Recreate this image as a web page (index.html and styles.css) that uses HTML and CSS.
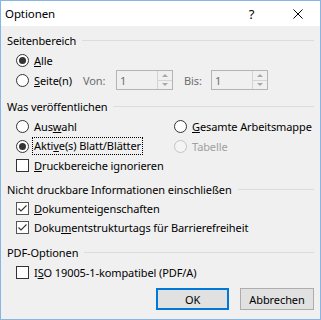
FILE: index.html
```html
<!DOCTYPE html>
<html lang="de">
<head>
  <meta charset="UTF-8"/>
  <title>Optionen</title>
  <link rel="stylesheet" href="styles.css">
</head>
<body>

  <div class="dialog">
    <!-- TITELLEISTE -->
    <div class="titlebar">
      <span class="title">Optionen</span>
      <span class="title-btn help">?</span>
      <span class="title-btn close">
        <svg width="10" height="10" viewBox="0 0 10 10"><path d="M0.5 0.5L9.5 9.5M9.5 0.5L0.5 9.5" stroke="#000" stroke-width="1" fill="none"/></svg>
      </span>
    </div>

    <div class="content">
      <!-- Seitenbereich -->
      <div class="group-head">Seitenbereich</div>
      <div class="row r20">
        <span class="radio checked"></span><span><u>A</u>lle</span>
      </div>
      <div class="row r20">
        <div class="opt opt-pages"><span class="radio"></span><span><u>S</u>eite(n)</span></div>
        <span class="spin-label von">Von:</span>
        <div class="spin">
          <span class="spin-val">1</span>
          <div class="spin-btns">
            <span class="arrow up"></span>
            <span class="arrow down"></span>
          </div>
        </div>
        <span class="spin-label bis">Bis:</span>
        <div class="spin">
          <span class="spin-val">1</span>
          <div class="spin-btns">
            <span class="arrow up"></span>
            <span class="arrow down"></span>
          </div>
        </div>
      </div>

      <!-- Was veröffentlichen -->
      <div class="group-head g2">Was veröffentlichen</div>
      <div class="grid">
        <div class="opt"><span class="radio"></span><span>Aus<u>w</u>ahl</span></div>
        <div class="opt"><span class="radio"></span><span><u>G</u>esamte Arbeitsmappe</span></div>
        <div class="opt"><span class="radio checked"></span><span class="focus">Akti<u>v</u>e(s) Blatt/Blätter</span></div>
        <div class="opt disabled"><span class="radio"></span><span>Tabelle</span></div>
      </div>
      <div class="row r19">
        <span class="check"></span><span><u>D</u>ruckbereiche ignorieren</span>
      </div>

      <!-- Nicht druckbare Informationen -->
      <div class="group-head g3">Nicht druckbare Informationen einschließen</div>
      <div class="row r19">
        <span class="check checked"><svg width="11" height="11" viewBox="0 0 11 11"><path d="M1.5 5.5L4 8L9.5 2.5" stroke="#333" stroke-width="1.1" fill="none"/></svg></span>
        <span><u>D</u>okumenteigenschaften</span>
      </div>
      <div class="row r19">
        <span class="check checked"><svg width="11" height="11" viewBox="0 0 11 11"><path d="M1.5 5.5L4 8L9.5 2.5" stroke="#333" stroke-width="1.1" fill="none"/></svg></span>
        <span>Doku<u>m</u>entstrukturtags für Barrierefreiheit</span>
      </div>

      <!-- PDF-Optionen -->
      <div class="group-head g4">PDF-Optionen</div>
      <div class="row r20">
        <span class="check"></span><span>I<u>S</u>O 19005-1-kompatibel (PDF/A)</span>
      </div>

      <div class="buttons">
        <button class="btn default">OK</button>
        <button class="btn">Abbrechen</button>
      </div>
    </div>
  </div>

</body>
</html>
```

FILE: styles.css
```css
* {
  margin: 0;
  padding: 0;
  box-sizing: border-box;
}

body {
  font-family: 'Noto Sans', 'Liberation Sans', sans-serif;
  font-size: 11px;
  letter-spacing: -0.1px;
  color: #000;
  background: #f0f0f0;
  white-space: nowrap;
}

.dialog {
  width: 321px;
  height: 320px;
  border: 1px solid #86b6e6;
  background: #f0f0f0;
  display: flex;
  flex-direction: column;
}

.titlebar {
  height: 25px;
  background: #ffffff;
  display: flex;
  align-items: center;
}

.title {
  flex: 1;
  padding-left: 4px;
  font-size: 11.5px;
}

.title-btn {
  width: 45px;
  height: 25px;
  display: flex;
  align-items: center;
  justify-content: center;
}

.help {
  font-size: 13px;
  padding-right: 2px;
}

.close svg {
  display: block;
  margin-left: 1px;
}

.content {
  padding: 4px 6px 0 6px;
}

.group-head {
  height: 20px;
  display: flex;
  align-items: center;
}

.group-head::after {
  content: "";
  flex: 1;
  height: 1px;
  background: #dcdcdc;
  margin-left: 6px;
}

.g2 { margin-top: 6px; }
.g3 { margin-top: 4px; }
.g4 { margin-top: 5px; }

.row {
  display: flex;
  align-items: center;
  padding-left: 9px;
}

.r20 { height: 20px; }
.r19 { height: 19px; }

.opt {
  display: flex;
  align-items: center;
  height: 20px;
}

.opt-pages {
  width: 67px;
}

.radio {
  width: 13px;
  height: 13px;
  border: 1px solid #333;
  border-radius: 50%;
  background: #fff;
  margin-right: 5px;
  display: flex;
  align-items: center;
  justify-content: center;
  flex-shrink: 0;
}

.radio.checked::after {
  content: "";
  width: 7px;
  height: 7px;
  border-radius: 50%;
  background: #333;
}

.disabled {
  color: #a0a0a0;
}

.disabled .radio {
  border-color: #c4c4c4;
  background: #f4f4f4;
}

.check {
  width: 13px;
  height: 13px;
  border: 1px solid #333;
  background: #fff;
  margin-right: 5px;
  flex-shrink: 0;
}

.check.checked {
  border-color: #555;
}

.check svg {
  display: block;
}

.focus {
  outline: 1px dotted #000;
  padding: 0 1px 1px 1px;
  margin-left: -1px;
}

.grid {
  display: grid;
  grid-template-columns: 158px 1fr;
  padding-left: 9px;
}

.spin-label {
  color: #6d6d6d;
}

.von { width: 33px; }
.bis { width: 27px; margin-left: 11px; }

.spin {
  width: 57px;
  height: 20px;
  border: 1px solid #b4b4b4;
  background: #f0f0f0;
  display: flex;
}

.spin-val {
  flex: 1;
  color: #6d6d6d;
  padding-left: 3px;
  line-height: 19px;
}

.spin-btns {
  width: 15px;
  border-left: 1px solid #d4d4d4;
  display: flex;
  flex-direction: column;
}

.arrow {
  flex: 1;
  display: flex;
  align-items: center;
  justify-content: center;
}

.arrow.up {
  border-bottom: 1px solid #d4d4d4;
}

.arrow::after {
  content: "";
  border-left: 3px solid transparent;
  border-right: 3px solid transparent;
}

.arrow.up::after {
  border-bottom: 3px solid #a8a8a8;
}

.arrow.down::after {
  border-top: 3px solid #a8a8a8;
}

.buttons {
  display: flex;
  justify-content: flex-end;
  gap: 11px;
  margin-top: 6px;
}

.btn {
  width: 74px;
  height: 22px;
  font-family: inherit;
  font-size: 11px;
  letter-spacing: -0.1px;
  background: #e1e1e1;
  border: 1px solid #adadad;
  color: #000;
}

.btn.default {
  width: 73px;
  border: 2px solid #0078d7;
}
```
